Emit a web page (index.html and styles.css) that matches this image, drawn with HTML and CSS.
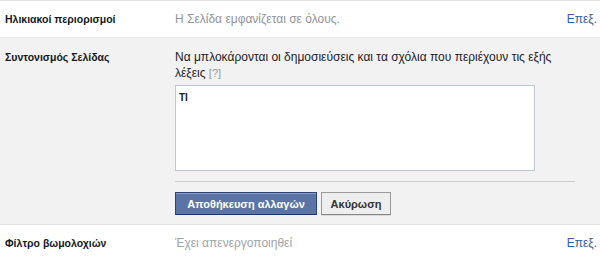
FILE: index.html
```html
<!DOCTYPE html>
<html lang="el">
<head>
    <meta charset="UTF-8">
    <meta name="viewport" content="width=device-width, initial-scale=1.0">
    <link rel="stylesheet" href="styles.css">
</head>
<body>
    <div class="settings">
        <div class="row row-closed">
            <div class="label">Ηλικιακοί περιορισμοί</div>
            <div class="value">Η Σελίδα εμφανίζεται σε όλους.</div>
            <a class="edit" href="#">Επεξ.</a>
        </div>

        <div class="row row-open">
            <div class="label">Συντονισμός Σελίδας</div>
            <div class="content">
                <div class="desc">Να μπλοκάρονται οι δημοσιεύσεις και τα σχόλια που περιέχουν τις εξής λέξεις <span class="help">[?]</span></div>
                <textarea class="words">ΤΙ</textarea>
                <div class="sep"></div>
                <div class="buttons">
                    <button class="btn btn-save" type="submit">Αποθήκευση αλλαγών</button>
                    <button class="btn btn-cancel" type="button">Ακύρωση</button>
                </div>
            </div>
        </div>

        <div class="row row-closed">
            <div class="label">Φίλτρο βωμολοχιών</div>
            <div class="value value-off">Έχει απενεργοποιηθεί</div>
            <a class="edit" href="#">Επεξ.</a>
        </div>
    </div>
</body>
</html>
```

FILE: styles.css
```css
* {
    margin: 0;
    padding: 0;
    box-sizing: border-box;
}

body {
    font-family: 'Liberation Sans', Arial, sans-serif;
    font-size: 12px;
    color: #1d2129;
    background-color: #ffffff;
}

.settings {
    border-top: 1px solid #e5e5e5;
}

.row {
    display: grid;
    grid-template-columns: 170px 1fr auto;
    padding: 0 3px 0 5px;
    border-bottom: 1px solid #e5e5e5;
}

.row-closed {
    height: 37px;
    align-items: center;
}

.row-open {
    background-color: #f2f2f2;
    padding-top: 11px;
    padding-bottom: 9px;
    grid-template-columns: 170px 1fr;
}

.label {
    font-size: 10.5px;
    font-weight: bold;
    color: #141823;
    line-height: 16px;
}

.value {
    color: #90949c;
}

.value-off {
    color: #a0a4aa;
}

.edit {
    color: #3b5998;
    text-decoration: none;
}

.desc {
    font-size: 12px;
    line-height: 16px;
    width: 400px;
    color: #1d2129;
}

.help {
    color: #999;
    font-size: 11px;
}

.words {
    display: block;
    width: 360px;
    height: 86px;
    margin-top: 4px;
    padding: 6px 3px;
    border: 1px solid #bdc7d8;
    background-color: #fff;
    font-family: 'Liberation Sans', Arial, sans-serif;
    font-size: 10px;
    font-weight: bold;
    color: #1d2129;
    resize: none;
}

.sep {
    width: 400px;
    height: 1px;
    margin-top: 10px;
    background-color: #ccc;
}

.buttons {
    display: flex;
    gap: 4px;
    margin-top: 10px;
}

.btn {
    height: 23px;
    padding: 0 7px;
    font-family: 'Liberation Sans', Arial, sans-serif;
    font-size: 11px;
    font-weight: bold;
    border: 1px solid;
    cursor: pointer;
}

.btn-save {
    width: 142px;
    color: #fff;
    background-color: #5b74a8;
    border-color: #29447e #29447e #1a356e;
    box-shadow: inset 0 1px 0 #8a9cc2;
}

.btn-cancel {
    width: 70px;
    color: #333;
    background-color: #eee;
    border-color: #999 #999 #888;
    box-shadow: 0 1px 0 rgba(0, 0, 0, 0.1);
}
```
